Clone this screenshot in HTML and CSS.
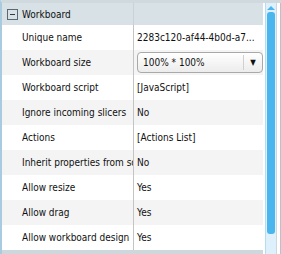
FILE: index.html
```html
<!DOCTYPE html>
<html>
<head>
	<title>Properties</title>
	<link rel="stylesheet" href="styles.css">
</head>
<body>
	<div class="panel">
		<div class="grid">
			<div class="group">
				<span class="toggle"><span class="minus"></span></span>
				<span class="group-title">Workboard</span>
				<span class="group-fill"></span>
			</div>
			<div class="row">
				<div class="name">Unique name</div>
				<div class="value">2283c120-af44-4b0d-a7...</div>
			</div>
			<div class="row alt">
				<div class="name">Workboard size</div>
				<div class="value">
					<div class="select">
						<span class="select-text">100% * 100%</span>
						<span class="select-btn">&#9660;</span>
					</div>
				</div>
			</div>
			<div class="row">
				<div class="name">Workboard script</div>
				<div class="value">[JavaScript]</div>
			</div>
			<div class="row alt">
				<div class="name">Ignore incoming slicers</div>
				<div class="value">No</div>
			</div>
			<div class="row">
				<div class="name">Actions</div>
				<div class="value">[Actions List]</div>
			</div>
			<div class="row alt">
				<div class="name">Inherit properties from screen</div>
				<div class="value">No</div>
			</div>
			<div class="row">
				<div class="name">Allow resize</div>
				<div class="value">Yes</div>
			</div>
			<div class="row alt">
				<div class="name">Allow drag</div>
				<div class="value">Yes</div>
			</div>
			<div class="row">
				<div class="name">Allow workboard design</div>
				<div class="value">Yes</div>
			</div>
		</div>
		<div class="scrollbar">
			<div class="arrow-up"></div>
			<div class="thumb"></div>
		</div>
		<div class="edge"></div>
	</div>
</body>
</html>
```

FILE: styles.css
```css
body {
	margin: 0;
	width: 281px;
	height: 254px;
	overflow: hidden;
	background-color: #ffffff;
	font-family: "DejaVu Sans Condensed", "DejaVu Sans", sans-serif;
	font-stretch: condensed;
	font-size: 10px;
	color: #111111;
}
.panel {
	display: flex;
	height: 254px;
	border-left: 2px solid #a8cbe0;
	border-top: 3px solid #cfd9de;
	box-sizing: border-box;
}
.grid {
	width: 262px;
	border-bottom: 4px solid #cdd8dd;
	box-sizing: border-box;
	height: 251px;
}
.group {
	display: flex;
	align-items: center;
	height: 22px;
	background-color: #d7e1e6;
}
.toggle {
	width: 20px;
	display: flex;
	justify-content: center;
}
.minus {
	width: 9px;
	height: 9px;
	border: 1px solid #5c6770;
	position: relative;
}
.minus::after {
	content: "";
	position: absolute;
	left: 2px;
	top: 4px;
	width: 5px;
	height: 1px;
	background-color: #33393e;
}
.group-title {
	width: 111px;
}
.group-fill {
	flex: 1;
	height: 22px;
	border-left: 1px solid #c8d2d7;
}
.row {
	display: flex;
	height: 25px;
	background-color: #ffffff;
}
.row.alt {
	background-color: #f4f4f4;
}
.name {
	width: 111px;
	padding-left: 20px;
	display: flex;
	align-items: center;
	white-space: nowrap;
	overflow: hidden;
	border-right: 1px solid #c4c4c4;
}
.value {
	flex: 1;
	padding-left: 3px;
	display: flex;
	align-items: center;
	white-space: nowrap;
	overflow: hidden;
}
.select {
	display: flex;
	align-items: center;
	width: 126px;
	height: 21px;
	border: 1px solid #a9a9a9;
	border-radius: 4px;
	background: linear-gradient(#ffffff, #ececec);
	box-sizing: border-box;
}
.select-text {
	flex: 1;
	padding-left: 5px;
}
.select-btn {
	width: 18px;
	height: 15px;
	border-left: 1px solid #d0d0d0;
	font-size: 8px;
	display: flex;
	align-items: center;
	justify-content: center;
	color: #111111;
}
.scrollbar {
	width: 12px;
	margin-left: 2px;
	background-color: #def0fb;
	border-left: 1px solid #b9dced;
	display: flex;
	flex-direction: column;
	align-items: center;
}
.arrow-up {
	margin-top: 3px;
	width: 0;
	height: 0;
	border-left: 4px solid transparent;
	border-right: 4px solid transparent;
	border-bottom: 4px solid #4bb6ee;
}
.thumb {
	margin-top: 2px;
	width: 8px;
	height: 222px;
	border-radius: 3px;
	background-color: #4bb6ee;
}
.edge {
	width: 4px;
	background-color: #ffffff;
	border-left: 1px solid #cfd7dc;
	border-right: 1px solid #b8c2c8;
}
```
